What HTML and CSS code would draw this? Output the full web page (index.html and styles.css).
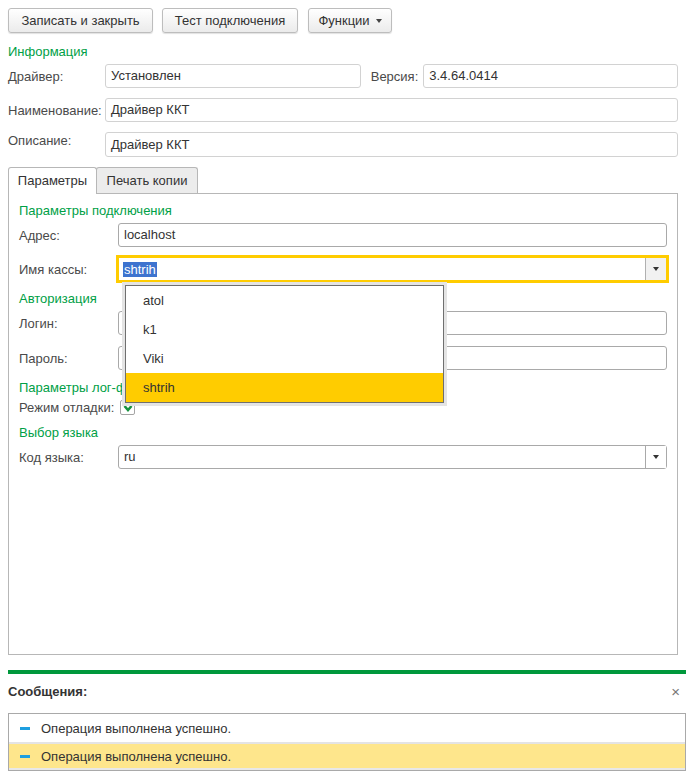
FILE: index.html
```html
<!DOCTYPE html>
<html lang="ru">
<head>
<meta charset="utf-8">
<title>Драйвер ККТ</title>
<link rel="stylesheet" href="styles.css">
</head>
<body>
<div class="page">
  <div class="toolbar">
    <button class="btn btn-save">Записать и закрыть</button>
    <button class="btn btn-test">Тест подключения</button>
    <button class="btn btn-func">Функции<span class="caret"></span></button>
  </div>

  <div class="form">
    <div class="group-title info-title">Информация</div>
    <div class="row first">
      <span class="label">Драйвер:</span>
      <div class="field ro f-driver">Установлен</div>
      <span class="label-ver">Версия:</span>
      <div class="field ro f-ver">3.4.64.0414</div>
    </div>
    <div class="row">
      <span class="label">Наименование:</span>
      <div class="field ro f-wide">Драйвер ККТ</div>
    </div>
    <div class="row row-desc">
      <span class="label label-top">Описание:</span>
      <div class="field ro f-wide f-desc">Драйвер ККТ</div>
    </div>

    <div class="tabs">
      <div class="tab active">Параметры</div>
      <div class="tab">Печать копии</div>
    </div>
    <div class="panel">
      <div class="group-title pt-first">Параметры подключения</div>
      <div class="row first">
        <span class="label plabel">Адрес:</span>
        <div class="field pf">localhost</div>
      </div>
      <div class="row">
        <span class="label plabel">Имя кассы:</span>
        <div class="field pf combo focused">
          <span class="sel">shtrih</span>
          <span class="combo-btn"><span class="arrow"></span></span>
          <div class="popup">
            <div class="item">atol</div>
            <div class="item">k1</div>
            <div class="item">Viki</div>
            <div class="item current">shtrih</div>
          </div>
        </div>
      </div>

      <div class="group-title pt">Авторизация</div>
      <div class="row first">
        <span class="label plabel">Логин:</span>
        <div class="field pf"></div>
      </div>
      <div class="row row-pass">
        <span class="label plabel">Пароль:</span>
        <div class="field pf"></div>
      </div>

      <div class="group-title pt clipped">Параметры лог-файла</div>
      <div class="row first row-check">
        <span class="label plabel">Режим отладки:</span>
        <span class="checkbox">
          <svg width="12" height="12" viewBox="0 0 12 12"><polyline points="2.5,4 6,8 9.5,4" fill="none" stroke="#17923f" stroke-width="2.6" stroke-linejoin="miter"/></svg>
        </span>
      </div>

      <div class="group-title pt">Выбор языка</div>
      <div class="row first">
        <span class="label plabel">Код языка:</span>
        <div class="field pf combo">
          <span class="val">ru</span>
          <span class="combo-btn plain"><span class="arrow"></span></span>
        </div>
      </div>
    </div>
  </div>

  <div class="green-bar"></div>

  <div class="msg-head">
    <span class="msg-title">Сообщения:</span>
    <span class="msg-close">×</span>
  </div>
  <div class="messages">
    <div class="msg"><span class="dash"></span>Операция выполнена успешно.</div>
    <div class="msg current"><span class="dash"></span>Операция выполнена успешно.</div>
  </div>
</div>
</body>
</html>
```
FILE: styles.css
```css
* { box-sizing: border-box; }

body {
  margin: 0;
  background: #fff;
  font-family: "Liberation Sans", Arial, sans-serif;
  font-size: 13px;
  color: #333;
}

.page {
  width: 694px;
  padding: 8px 8px 0 8px;
}

/* toolbar */
.toolbar {
  display: flex;
  gap: 9px;
  height: 25px;
}
.btn {
  height: 25px;
  padding: 0;
  border: 1px solid #bdbdbd;
  border-radius: 3px;
  background: linear-gradient(#ffffff, #ebebeb);
  box-shadow: 0 1px 1px rgba(0, 0, 0, 0.12);
  font-family: "Liberation Sans", Arial, sans-serif;
  font-size: 13px;
  color: #333;
  display: flex;
  align-items: center;
  justify-content: center;
}
.btn-save { width: 145px; }
.btn-test { width: 136px; }
.btn-func { width: 84px; margin-left: 1px; }
.caret {
  display: inline-block;
  margin-left: 6px;
  border-top: 4px solid #444;
  border-left: 3.5px solid transparent;
  border-right: 3.5px solid transparent;
}

/* form */
.form { width: 670px; }

.group-title {
  color: #00a046;
  line-height: 16px;
  height: 16px;
}
.info-title { margin-top: 11px; }
.clipped {
  width: 103px;
  overflow: hidden;
  white-space: nowrap;
}

.row {
  display: flex;
  align-items: center;
  height: 24px;
  margin-top: 10px;
}
.row.first { margin-top: 4px; }

.label {
  width: 97px;
  flex: none;
  color: #4a4a4a;
  white-space: nowrap;
}
.plabel { width: 99px; }

.field {
  height: 24px;
  border: 1px solid #a9a9a9;
  border-radius: 3px;
  padding: 0 5px;
  line-height: 22px;
  color: #333;
  background: #fff;
}
.field.ro { border-color: #d2d2d2; }
.f-driver { width: 256px; }
.label-ver { margin-left: 10px; margin-right: 5px; color: #4a4a4a; }
.f-ver { width: 255px; }
.f-wide { width: 573px; }

.row-desc { height: 25px; align-items: flex-start; }
.f-desc { height: 25px; line-height: 23px; }
.label-top { padding-top: 1px; }

/* tabs */
.tabs {
  display: flex;
  margin-top: 10px;
  height: 26px;
  position: relative;
  z-index: 1;
}
.tab {
  height: 26px;
  border: 1px solid #b7b7b7;
  border-bottom: none;
  border-radius: 3px 3px 0 0;
  background: #ececec;
  color: #333;
  display: flex;
  align-items: center;
  justify-content: center;
  width: 102px;
  margin-left: -1px;
}
.tab.active {
  width: 89px;
  height: 27px;
  margin-left: 0;
  background: #fff;
  position: relative;
  z-index: 2;
  padding-bottom: 1px;
}

.panel {
  width: 670px;
  height: 462px;
  border: 1px solid #b7b7b7;
  padding: 0 10px;
}
.pt-first { margin-top: 9px; }
.pt { margin-top: 10px; }
.pf { width: 550px; }
.row-pass { margin-top: 11px; }

/* combo */
.combo {
  position: relative;
  padding-left: 4px;
  padding-right: 0;
  display: flex;
  align-items: center;
}
.combo .val { padding-left: 1px; flex: 1; }
.combo.focused {
  border-color: #ffcc00;
  outline: 2px solid #ffcc00;
  border-radius: 0;
}
.sel {
  display: inline-block;
  background: #3d73cf;
  color: #fff;
  line-height: 15px;
  padding: 0 1px;
  flex: none;
}
.combo-btn {
  margin-left: auto;
  width: 21px;
  height: 22px;
  border-left: 1px solid #b0b0b0;
  background: #f1f1f1;
  display: flex;
  align-items: center;
  justify-content: center;
}
.combo-btn.plain { background: #fff; border-left-color: #a9a9a9; }
.arrow {
  display: block;
  border-top: 4px solid #333;
  border-left: 3.5px solid transparent;
  border-right: 3.5px solid transparent;
}

.popup {
  position: absolute;
  left: 6px;
  top: 27px;
  width: 319px;
  border: 1px solid #6f6f6f;
  background: #fff;
  box-shadow: 0 0 0 3px #e4e4e4;
  z-index: 10;
}
.item {
  height: 29px;
  line-height: 29px;
  padding-left: 17px;
  color: #333;
}
.item.current { background: #ffcc00; }

/* checkbox */
.row-check { height: 15px; }
.checkbox {
  width: 15px;
  height: 15px;
  margin-left: 2px;
  border: 1px solid #a5a5a5;
  border-radius: 2px;
  background: #fff;
  display: flex;
  align-items: center;
  justify-content: center;
}

/* messages */
.green-bar {
  margin-top: 15px;
  height: 4px;
  width: 678px;
  background: #00983c;
}
.msg-head {
  display: flex;
  justify-content: space-between;
  align-items: center;
  margin-top: 9px;
  height: 16px;
}
.msg-title { font-weight: bold; color: #333; }
.msg-close { color: #777; font-size: 15px; margin-right: 6px; }

.messages {
  margin-top: 14px;
  width: 678px;
  border: 1px solid #a9a9a9;
}
.msg {
  height: 28px;
  display: flex;
  align-items: center;
  padding-left: 11px;
  color: #333;
}
.msg.current {
  background: #fee68c;
  border-top: 2px solid #e4e4e4;
  border-bottom: 2px solid #e8e8e8;
}
.dash {
  display: inline-block;
  width: 10px;
  height: 3px;
  background: #1e9fe0;
  margin-right: 11px;
}
```
